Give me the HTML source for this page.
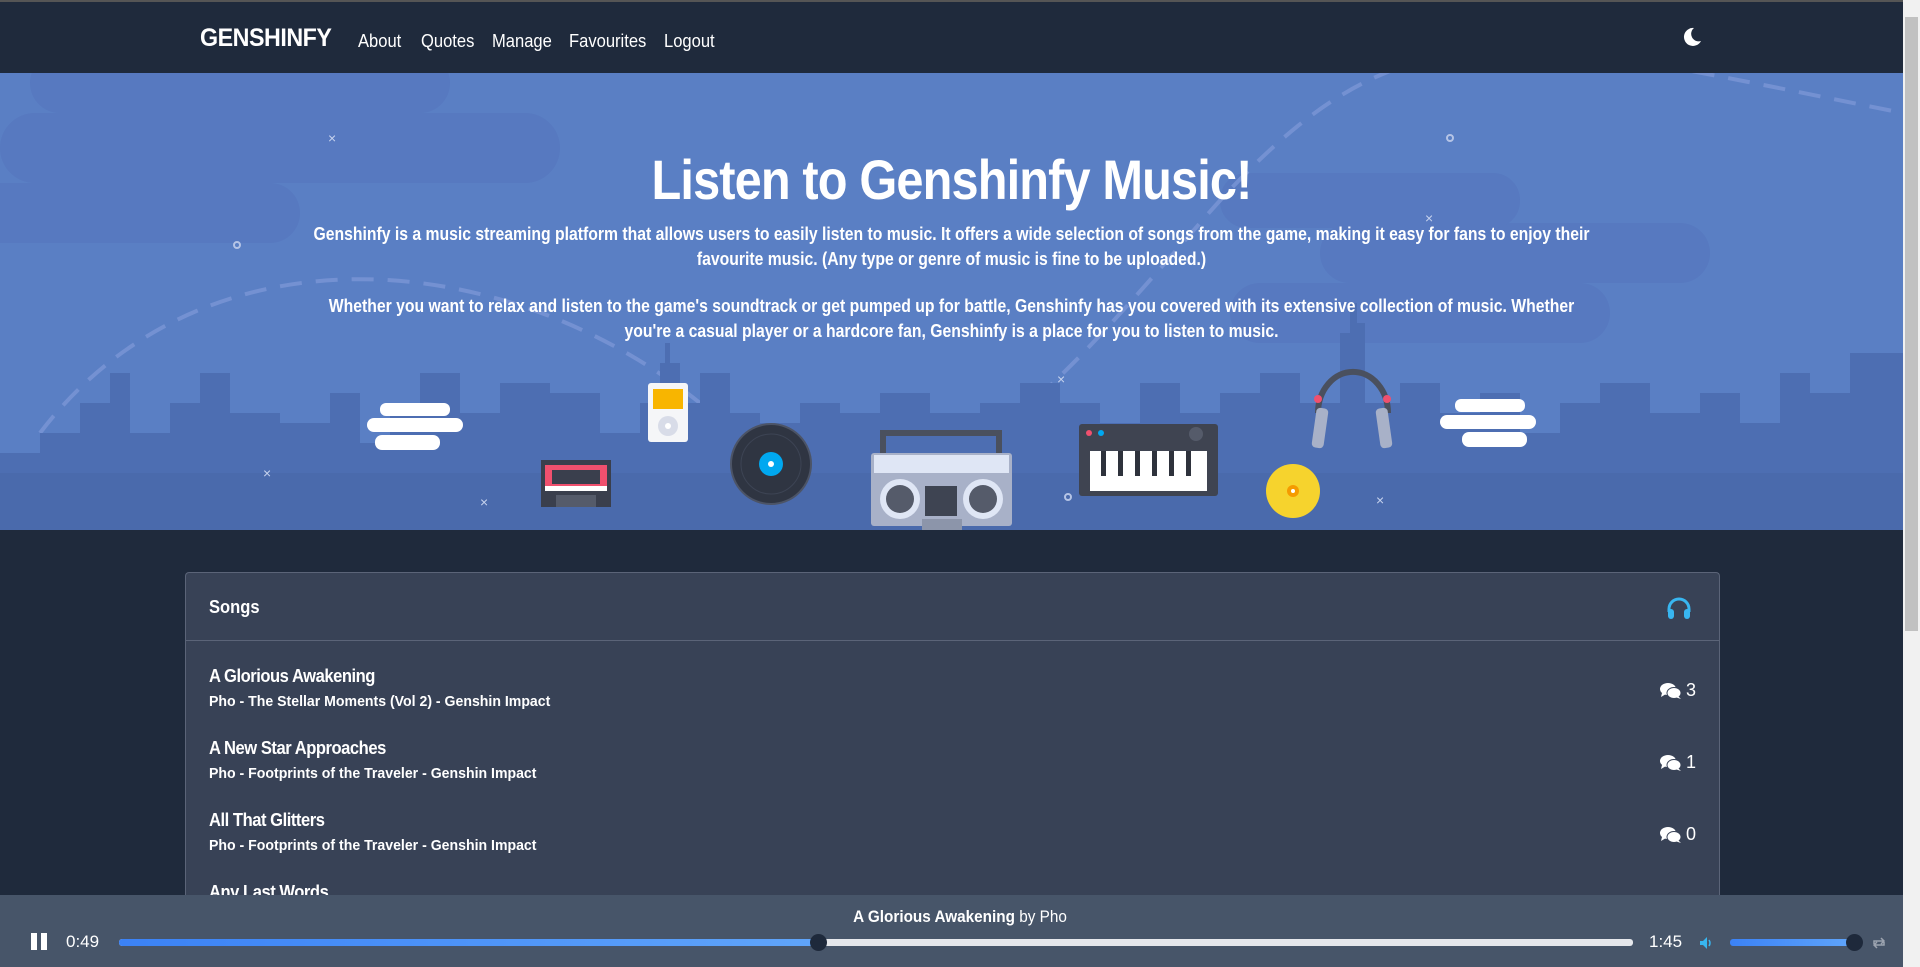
<!DOCTYPE html>
<html><head><meta charset="utf-8">
<style>
*{margin:0;padding:0;box-sizing:border-box}
html,body{width:1920px;height:967px;overflow:hidden}
body{background:#1f2a3c;font-family:"Liberation Sans",sans-serif;color:#fff;position:relative}
.nav{position:absolute;left:0;top:0;width:1903px;height:73px;background:#1f2a3c;border-top:2px solid #555}
.logo{position:absolute;left:200px;top:22px;font-size:25px;font-weight:bold;letter-spacing:-0.5px;transform:scaleX(0.93);transform-origin:left}
.links{position:absolute;top:29px;font-size:18px}
.links span{position:absolute;white-space:nowrap;transform:scaleX(0.92);transform-origin:left}
.hero{position:absolute;left:0;top:73px;width:1903px;height:457px;background:#5a7fc4;overflow:hidden}
.hero h1{position:absolute;left:0;width:1903px;top:74px;text-align:center;font-size:56px;font-weight:bold;letter-spacing:-1px;transform:scaleX(0.87)}
.hero p{position:absolute;left:0;width:1903px;text-align:center;font-size:18px;line-height:24.5px;font-weight:bold;white-space:nowrap;transform:scaleX(0.875)}
.card{position:absolute;left:185px;top:572px;width:1535px;height:330px;background:#384256;border:1px solid #5b6478;border-bottom:none;border-radius:4px 4px 0 0;overflow:hidden}
.card .hd{height:68px;border-bottom:1px solid #5b6478;position:relative}
.card .hd b{position:absolute;left:23px;top:24px;font-size:18px;transform:scaleX(0.92);transform-origin:left}
.row{position:absolute;left:23px;right:23px;height:60px}
.row .t{font-size:18px;font-weight:bold;letter-spacing:-0.5px;transform:scaleX(0.92);transform-origin:left;white-space:nowrap}
.row .s{font-size:15px;margin-top:6px;font-weight:bold;transform:scaleX(0.94);transform-origin:left;white-space:nowrap}
.row .c{position:absolute;right:0;top:14px;font-size:18px;display:flex;align-items:center;gap:3px}
.player{position:absolute;left:0;top:895px;width:1903px;height:72px;background:#475569;z-index:5}
.scroll{position:absolute;right:0;top:0;width:17px;height:967px;background:#f1f1f1;z-index:6}
.scroll div{position:absolute;left:2px;right:2px;top:17px;height:614px;background:#c1c1c1}
</style></head><body>
<div class="nav">
  <div class="logo">GENSHINFY</div>
  <div class="links">
    <span style="left:358px">About</span><span style="left:421px">Quotes</span><span style="left:492px">Manage</span><span style="left:569px">Favourites</span><span style="left:664px">Logout</span>
  </div>
  <svg style="position:absolute;left:1682px;top:25px" width="20" height="20" viewBox="0 0 20 20"><path d="M12 1A9 9 0 1 0 19 14 7.5 7.5 0 0 1 12 1Z" fill="#fff"/></svg>
</div>

<div class="hero">
<svg width="1903" height="457" style="position:absolute;left:0;top:0">
  <g fill="#5779c0">
    <rect x="30" y="-20" width="420" height="60" rx="30"/>
    <rect x="0" y="40" width="560" height="70" rx="35"/>
    <rect x="-40" y="110" width="340" height="60" rx="30"/>
    <rect x="1320" y="150" width="390" height="60" rx="30"/>
    <rect x="1230" y="210" width="380" height="60" rx="30"/>
    <rect x="1220" y="100" width="300" height="55" rx="27"/>
  </g>
  <path d="M40 360 C200 150 500 170 700 330 S 1000 380 1200 150 S 1500 -40 1903 40" fill="none" stroke="#7a96d6" stroke-width="4" stroke-dasharray="22 14" opacity="0.8"/>
  <g fill="#4d6eb2">
    <path d="M0 457 V380 H40 V360 H80 V330 H110 V300 H130 V360 H170 V330 H200 V300 H230 V340 H280 V350 H330 V320 H360 V370 H390 V330 H420 V300 H460 V340 H500 V310 H550 V320 H600 V360 H640 V330 H660 V290 H665 V270 H670 V290 H680 V330 H700 V300 H730 V340 H760 V350 H800 V330 H840 V340 H880 V320 H930 V340 H980 V330 H1020 V310 H1060 V330 H1100 V350 H1140 V310 H1180 V340 H1220 V320 H1260 V300 H1300 V330 H1340 V260 H1350 V230 H1357 V250 H1365 V330 H1400 V310 H1440 V340 H1480 V320 H1520 V360 H1560 V330 H1600 V310 H1650 V340 H1700 V320 H1740 V350 H1780 V300 H1810 V320 H1850 V280 H1903 V457 Z"/>
  </g>
  <rect x="0" y="400" width="1903" height="57" fill="#4a6aac"/>
  <g fill="#fff">
    <rect x="380" y="330" width="70" height="13" rx="6"/><rect x="367" y="345" width="96" height="14" rx="7"/><rect x="375" y="362" width="65" height="15" rx="7"/>
    <rect x="1455" y="326" width="70" height="13" rx="6"/><rect x="1440" y="342" width="96" height="14" rx="7"/><rect x="1462" y="359" width="65" height="15" rx="7"/>
  </g>
  <rect x="541" y="387" width="70" height="47" fill="#3a3f4d"/><rect x="545" y="392" width="62" height="25" fill="#f0506e"/><rect x="552" y="397" width="48" height="14" fill="#3a3f4d"/><rect x="545" y="413" width="62" height="5" fill="#fff"/><rect x="556" y="422" width="40" height="12" fill="#555b6a"/>
  <rect x="648" y="310" width="40" height="59" rx="3" fill="#f5f6f8"/><rect x="653" y="316" width="30" height="20" fill="#f8b500"/><circle cx="668" cy="353" r="10" fill="#d8dce8"/><circle cx="668" cy="353" r="3" fill="#fff"/>
  <circle cx="771" cy="391" r="40" fill="#2f3542" stroke="#4c5466" stroke-width="2"/><circle cx="771" cy="391" r="30" fill="none" stroke="#3d4454"/><circle cx="771" cy="391" r="12" fill="#00a8f0"/><circle cx="771" cy="391" r="3" fill="#fff"/>
  <rect x="883" y="360" width="116" height="24" fill="none" stroke="#4a505e" stroke-width="6"/>
  <rect x="871" y="380" width="141" height="73" rx="3" fill="#a8b1c8"/><rect x="874" y="382" width="135" height="18" fill="#dfe6f5"/>
  <circle cx="900" cy="426" r="20" fill="#dfe6f5"/><circle cx="900" cy="426" r="14" fill="#555b6a"/>
  <circle cx="983" cy="426" r="20" fill="#dfe6f5"/><circle cx="983" cy="426" r="14" fill="#555b6a"/>
  <rect x="925" y="413" width="32" height="30" fill="#3e4452"/><rect x="922" y="446" width="40" height="11" fill="#8c95aa"/>
  <rect x="1079" y="351" width="139" height="72" rx="3" fill="#3f4451"/><rect x="1090" y="378" width="117" height="40" fill="#fff"/>
  <g fill="#2e323c"><rect x="1101" y="378" width="5" height="25"/><rect x="1118" y="378" width="5" height="25"/><rect x="1135" y="378" width="5" height="25"/><rect x="1152" y="378" width="5" height="25"/><rect x="1169" y="378" width="5" height="25"/><rect x="1186" y="378" width="5" height="25"/></g>
  <circle cx="1089" cy="360" r="3" fill="#f0506e"/><circle cx="1101" cy="360" r="3" fill="#00a8f0"/><circle cx="1196" cy="361" r="7" fill="#555b6a"/>
  <circle cx="1293" cy="418" r="27" fill="#f6d32d"/><circle cx="1293" cy="418" r="6" fill="#f59b00"/><circle cx="1293" cy="418" r="2" fill="#fff"/>
  <path d="M1318 340 A34 40 0 0 1 1388 340" fill="none" stroke="#4a505e" stroke-width="6"/>
  <rect x="1314" y="335" width="12" height="40" rx="4" fill="#a8b1c8" transform="rotate(8 1320 355)"/><rect x="1378" y="335" width="12" height="40" rx="4" fill="#a8b1c8" transform="rotate(-8 1384 355)"/>
  <circle cx="1318" cy="326" r="4" fill="#f0506e"/><circle cx="1387" cy="326" r="4" fill="#f0506e"/>
  <g fill="#c7d3ee" font-size="14" font-family="Liberation Sans"><text x="328" y="70">×</text><text x="1425" y="150">×</text><text x="1057" y="311">×</text><text x="263" y="405">×</text><text x="480" y="434">×</text><text x="1376" y="432">×</text></g>
  <g fill="none" stroke="#b5c4e6" stroke-width="2"><circle cx="1450" cy="65" r="3"/><circle cx="237" cy="172" r="3"/><circle cx="1068" cy="424" r="3"/></g>
</svg>
<h1>Listen to Genshinfy Music!</h1>
<p style="top:149px">Genshinfy is a music streaming platform that allows users to easily listen to music. It offers a wide selection of songs from the game, making it easy for fans to enjoy their<br>favourite music. (Any type or genre of music is fine to be uploaded.)</p>
<p style="top:221px">Whether you want to relax and listen to the game's soundtrack or get pumped up for battle, Genshinfy has you covered with its extensive collection of music. Whether<br>you're a casual player or a hardcore fan, Genshinfy is a place for you to listen to music.</p>
</div>

<div class="card">
  <div class="hd"><b>Songs</b>
    <svg style="position:absolute;right:27px;top:23px" width="26" height="24" viewBox="0 0 26 24"><path d="M3 16V13A10 10 0 0 1 23 13V16" fill="none" stroke="#38b6f0" stroke-width="3"/><rect x="2" y="13" width="6" height="10" rx="3" fill="#38b6f0"/><rect x="18" y="13" width="6" height="10" rx="3" fill="#38b6f0"/></svg>
  </div>
  <div class="row" style="top:93px"><div class="t">A Glorious Awakening</div><div class="s">Pho - The Stellar Moments (Vol 2) - Genshin Impact</div><div class="c"><svg width="24" height="18" viewBox="0 0 24 18"><ellipse cx="9" cy="7" rx="8" ry="6" fill="#fff"/><ellipse cx="15" cy="11" rx="7" ry="5.5" fill="#fff" stroke="#384256"/><path d="M3 11L2 15 7 12Z M19 14 22 17 16 15Z" fill="#fff"/></svg>3</div></div>
  <div class="row" style="top:165px"><div class="t">A New Star Approaches</div><div class="s">Pho - Footprints of the Traveler - Genshin Impact</div><div class="c"><svg width="24" height="18" viewBox="0 0 24 18"><ellipse cx="9" cy="7" rx="8" ry="6" fill="#fff"/><ellipse cx="15" cy="11" rx="7" ry="5.5" fill="#fff" stroke="#384256"/><path d="M3 11L2 15 7 12Z M19 14 22 17 16 15Z" fill="#fff"/></svg>1</div></div>
  <div class="row" style="top:237px"><div class="t">All That Glitters</div><div class="s">Pho - Footprints of the Traveler - Genshin Impact</div><div class="c"><svg width="24" height="18" viewBox="0 0 24 18"><ellipse cx="9" cy="7" rx="8" ry="6" fill="#fff"/><ellipse cx="15" cy="11" rx="7" ry="5.5" fill="#fff" stroke="#384256"/><path d="M3 11L2 15 7 12Z M19 14 22 17 16 15Z" fill="#fff"/></svg>0</div></div>
  <div class="row" style="top:309px"><div class="t">Any Last Words</div></div>
</div>

<div class="player">
  <div style="position:absolute;left:0;width:1920px;top:12px;text-align:center;font-size:17px;transform:scaleX(0.9)"><b>A Glorious Awakening</b> by Pho</div>
  <div style="position:absolute;left:31px;top:38px;width:6px;height:17px;background:#fff"></div>
  <div style="position:absolute;left:41px;top:38px;width:6px;height:17px;background:#fff"></div>
  <div style="position:absolute;left:66px;top:37px;font-size:17px">0:49</div>
  <div style="position:absolute;left:119px;top:44px;width:1514px;height:7px;background:#e5e7eb;border-radius:3px"></div>
  <div style="position:absolute;left:119px;top:44px;width:700px;height:7px;background:linear-gradient(90deg,#3b82f6,#60a5fa);border-radius:3px"></div>
  <div style="position:absolute;left:810px;top:39px;width:17px;height:17px;border-radius:50%;background:#1e293b"></div>
  <div style="position:absolute;left:1649px;top:37px;font-size:17px">1:45</div>
  <svg style="position:absolute;left:1698px;top:40px" width="16" height="16" viewBox="0 0 16 16"><path d="M2 6H5L9 2V14L5 10H2Z" fill="#38b6f0"/><path d="M11 5Q13 8 11 11" stroke="#38b6f0" fill="none" stroke-width="1.5"/></svg>
  <div style="position:absolute;left:1730px;top:44px;width:124px;height:7px;background:linear-gradient(90deg,#3b82f6,#60a5fa);border-radius:3px"></div>
  <div style="position:absolute;left:1846px;top:39px;width:17px;height:17px;border-radius:50%;background:#1e293b"></div>
  <svg style="position:absolute;left:1871px;top:40px" width="16" height="16" viewBox="0 0 16 16"><path d="M3 9V6H12M10 3 13 6 10 9M13 7V10H4M6 13 3 10 6 7" fill="none" stroke="#9ca3af" stroke-width="1.5"/></svg>
</div>
<div class="scroll"><div></div></div>
</body></html>
